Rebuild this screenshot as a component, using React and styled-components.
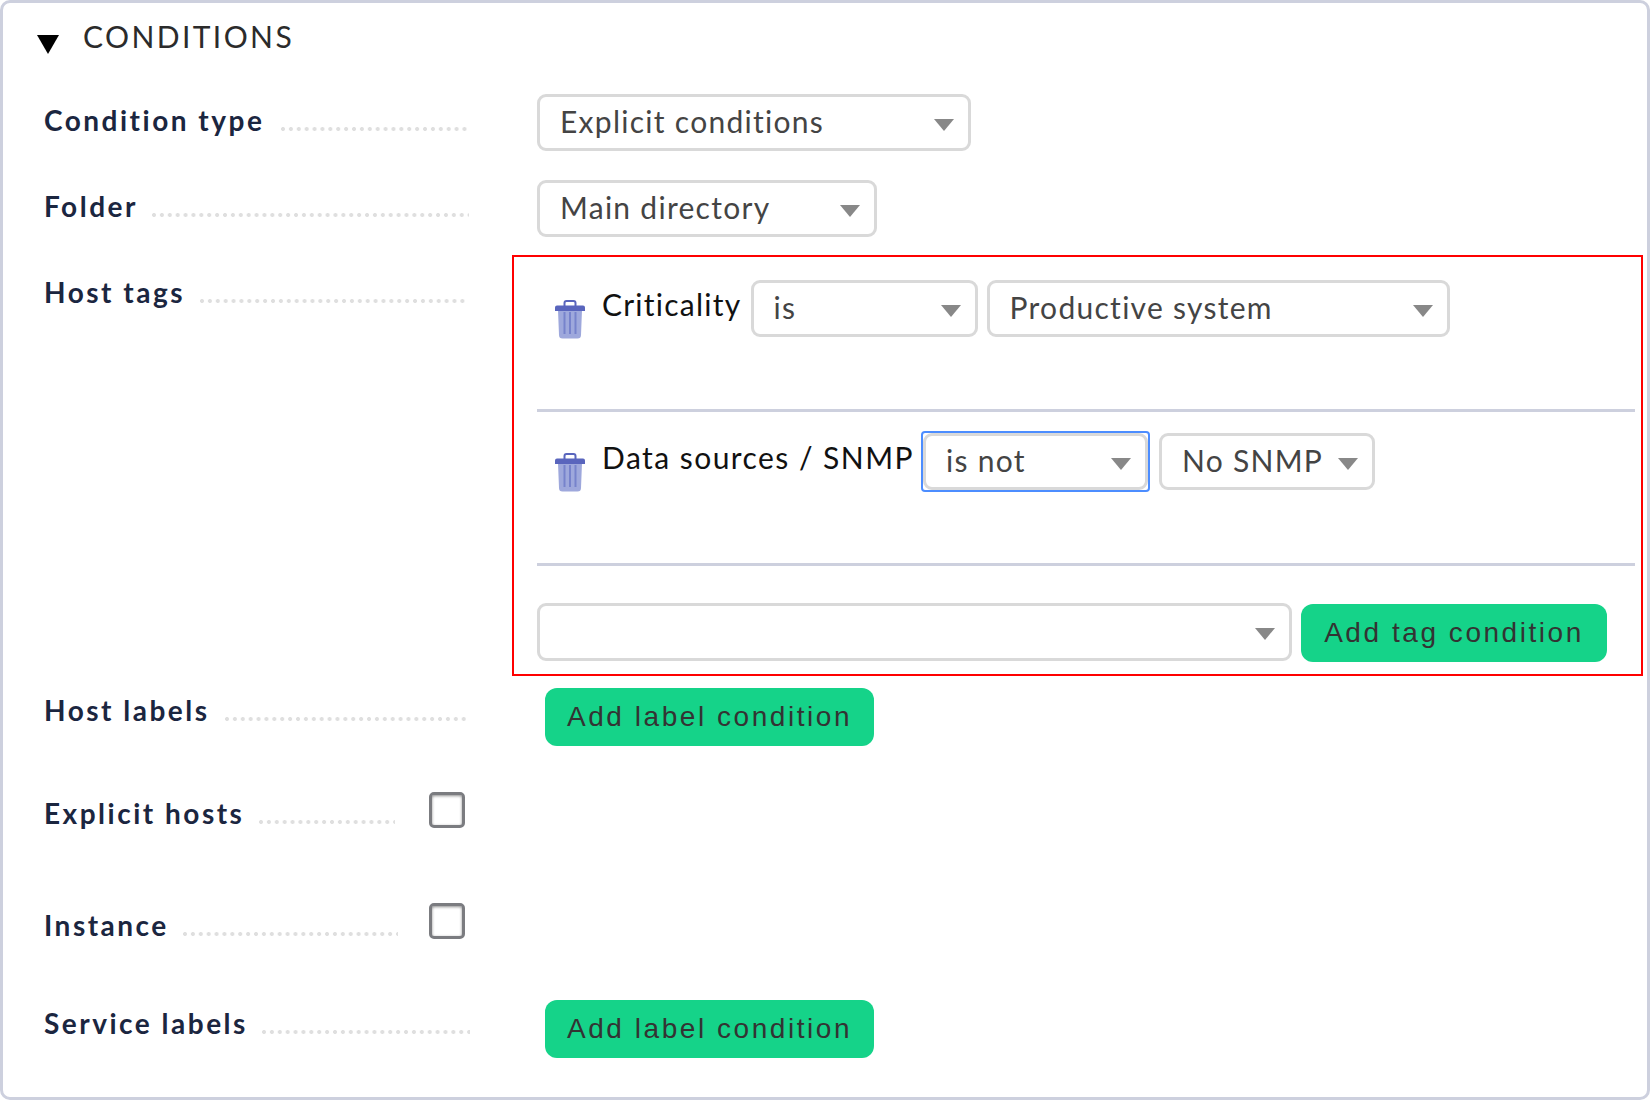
import styled, { createGlobalStyle } from "styled-components";

const GlobalStyle = createGlobalStyle`
  html, body {
    margin: 0;
    padding: 0;
    background: #fff;
  }
  body {
    font-family: "Lato", "Liberation Sans", sans-serif;
  }
`;

const Panel = styled.div`
  box-sizing: border-box;
  width: 1650px;
  height: 1100px;
  padding: 0 0 0 41px;
  border: 3px solid #cdd0de;
  border-radius: 10px;
  background: #fff;
`;

const Heading = styled.div`
  display: flex;
  align-items: center;
  height: 74px;
  margin-bottom: 17px;
`;

const HeadingArrow = styled.span`
  width: 0;
  height: 0;
  margin: 8px 24px 0 -7px;
  border-left: 11px solid transparent;
  border-right: 11px solid transparent;
  border-top: 19px solid #000;
`;

const HeadingText = styled.span`
  margin-bottom: 8px;
  font-size: 30px;
  font-weight: 400;
  letter-spacing: 2.4px;
  color: #2b2b2b;
`;

const Row = styled.div`
  display: flex;
  align-items: flex-start;
  height: ${(p) => p.$height}px;
`;

const LabelCell = styled.div`
  display: flex;
  align-items: flex-start;
  flex: none;
  box-sizing: border-box;
  width: 468px;
  padding-top: ${(p) => p.$top}px;
`;

const Label = styled.span`
  font-size: 28px;
  font-weight: 700;
  line-height: 34px;
  letter-spacing: 2.5px;
  color: #1b2640;
  white-space: nowrap;
`;

const Dots = styled.span`
  flex: none;
  width: ${(p) => p.$width}px;
  height: 4px;
  margin-top: 24px;
  margin-left: auto;
  margin-right: ${(p) => p.$right}px;
  background: radial-gradient(circle at 2px 2px, #dfdfdf 1.9px, transparent 2.2px);
  background-size: 7.9px 4px;
`;

const Checkbox = styled.span`
  position: absolute;
  box-sizing: border-box;
  left: 385px;
  top: 0;
  width: 36px;
  height: 36px;
  border: 3px solid #7b7c80;
  border-radius: 5px;
  box-shadow: inset 0 1px 3px rgba(0, 0, 0, 0.45);
`;

const CheckCell = styled(LabelCell)`
  position: relative;
`;

const Field = styled.div`
  padding-left: 25px;
`;

const SelectBox = styled.div`
  display: flex;
  align-items: center;
  flex: none;
  box-sizing: border-box;
  width: ${(p) => p.$width}px;
  height: ${(p) => p.$height || 57}px;
  padding: 0 14px 0 20px;
  border: 3px solid #d9d9d9;
  border-radius: 9px;
  background: #fff;
  font-size: 30px;
  letter-spacing: 1.28px;
  color: #444;
  white-space: nowrap;
`;

const SelectText = styled.span`
  margin-bottom: 4px;
`;

const Arrow = styled.span`
  flex: none;
  width: 0;
  height: 0;
  margin-left: auto;
  margin-top: 4px;
  border-left: 10px solid transparent;
  border-right: 10px solid transparent;
  border-top: 12px solid #888;
`;

const FocusRing = styled.div`
  flex: none;
  margin: -2px 0 0 -2px;
  border: 2px solid #4c8dff;
  border-radius: 4px;
`;

const TagBox = styled.div`
  box-sizing: border-box;
  width: 1131px;
  height: 421px;
  padding: 22px 6px 0 23px;
  border: 2px solid #f00;
`;

const TagRow = styled.div`
  display: flex;
  align-items: flex-start;
  gap: 9px;
  height: ${(p) => p.$height}px;
  padding-top: ${(p) => p.$pad || 0}px;
  border-bottom: ${(p) => (p.$last ? "none" : "3px solid #cdd0de")};
  margin-bottom: ${(p) => p.$gap || 0}px;
`;

const TrashButton = styled.span`
  flex: none;
  width: 30px;
  height: 39px;
  margin: 20px 8px 0 18px;
`;

const TagName = styled.span`
  flex: none;
  margin-top: 6px;
  font-size: 30px;
  line-height: 36px;
  letter-spacing: ${(p) => p.$spacing}px;
  color: #111;
  white-space: nowrap;
`;

const GreenButton = styled.button`
  flex: none;
  box-sizing: border-box;
  width: ${(p) => p.$width}px;
  height: 58px;
  margin-top: ${(p) => p.$topGap || 0}px;
  margin-left: ${(p) => p.$left || 0}px;
  padding: 0;
  border: none;
  border-radius: 12px;
  background: #15d389;
  font-family: "Liberation Sans", Arial, sans-serif;
  font-size: 28px;
  letter-spacing: 2.55px;
  color: #333;
`;

const Select = ({ width, height, children }) => (
  <SelectBox $width={width} $height={height}>
    {children && <SelectText>{children}</SelectText>}
    <Arrow />
  </SelectBox>
);

const TrashIcon = () => (
  <svg width="30" height="39" viewBox="0 0 30 39">
    <path
      d="M3 10h24l-1 25a3.5 3.5 0 0 1-3.5 3.5h-15A3.5 3.5 0 0 1 4 35z"
      fill="#9ea8dc"
    />
    <path d="M9.5 7V3a2 2 0 0 1 2-2h7a2 2 0 0 1 2 2v4" fill="none" stroke="#5965bd" strokeWidth="2" />
    <path d="M2 5.5h26a2 2 0 0 1 2 2V11H0V7.5a2 2 0 0 1 2-2z" fill="#5965bd" />
    <path d="M9.5 12v22M15 12v22M20.5 12v22" stroke="#7783cc" strokeWidth="2" />
  </svg>
);

const App = () => {
  return (
    <Panel>
      <GlobalStyle />
      <Heading>
        <HeadingArrow />
        <HeadingText>CONDITIONS</HeadingText>
      </Heading>

      <Row $height={86}>
        <LabelCell $top={9}>
          <Label>Condition type</Label>
          <Dots $width={187} $right={44} />
        </LabelCell>
        <Field>
          <Select width={434}>Explicit conditions</Select>
        </Field>
      </Row>

      <Row $height={75}>
        <LabelCell $top={9}>
          <Label>Folder</Label>
          <Dots $width={317} $right={43} />
        </LabelCell>
        <Field>
          <Select width={340}>Main directory</Select>
        </Field>
      </Row>

      <Row $height={433}>
        <LabelCell $top={20}>
          <Label>Host tags</Label>
          <Dots $width={268} $right={44} />
        </LabelCell>
        <TagBox>
          <TagRow $height={129} $pad={1} $gap={20}>
            <TrashButton>
              <TrashIcon />
            </TrashButton>
            <TagName $spacing={1.25}>Criticality</TagName>
            <Select width={227}>is</Select>
            <Select width={463}>Productive system</Select>
          </TagRow>
          <TagRow $height={130} $pad={1} $gap={37}>
            <TrashButton>
              <TrashIcon />
            </TrashButton>
            <TagName $spacing={1.45}>Data sources / SNMP</TagName>
            <FocusRing>
              <Select width={225}>is not</Select>
            </FocusRing>
            <Select width={216}>No SNMP</Select>
          </TagRow>
          <TagRow $height={60} $last>
            <Select width={755} height={58} />
            <GreenButton $width={306} $topGap={1}>
              Add tag condition
            </GreenButton>
          </TagRow>
        </TagBox>
      </Row>

      <Row $height={104}>
        <LabelCell $top={5}>
          <Label>Host labels</Label>
          <Dots $width={243} $right={44} />
        </LabelCell>
        <GreenButton $width={329} $left={33}>
          Add label condition
        </GreenButton>
      </Row>

      <Row $height={111}>
        <CheckCell $top={4}>
          <Label>Explicit hosts</Label>
          <Dots $width={136} $right={117} />
          <Checkbox />
        </CheckCell>
      </Row>

      <Row $height={97}>
        <CheckCell $top={5}>
          <Label>Instance</Label>
          <Dots $width={215} $right={114} />
          <Checkbox />
        </CheckCell>
      </Row>

      <Row $height={60}>
        <LabelCell $top={6}>
          <Label>Service labels</Label>
          <Dots $width={208} $right={42} />
        </LabelCell>
        <GreenButton $width={329} $left={33}>
          Add label condition
        </GreenButton>
      </Row>
    </Panel>
  );
};

export default App;
